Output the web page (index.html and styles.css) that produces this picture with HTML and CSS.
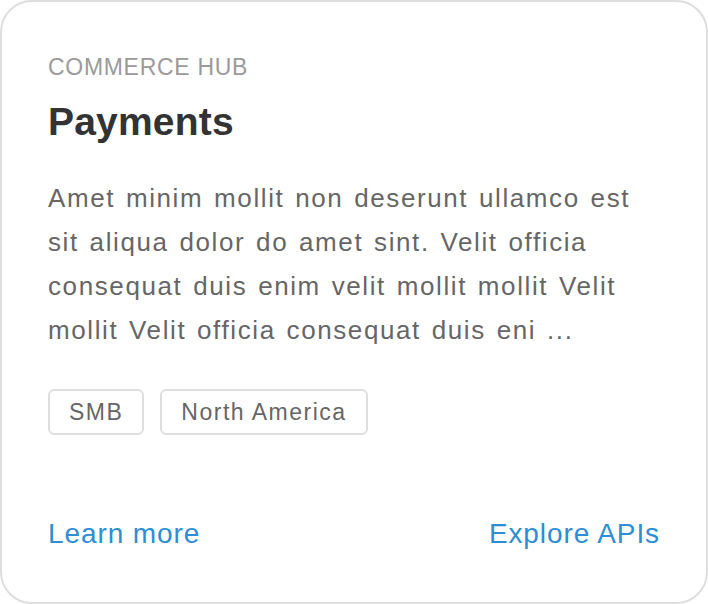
FILE: index.html
```html
<!DOCTYPE html>
<html>
<head>
<meta charset="utf-8">
<link rel="stylesheet" href="styles.css">
</head>
<body>
<div class="card">
  <div class="eyebrow">COMMERCE HUB</div>
  <h2 class="title">Payments</h2>
  <p class="desc">Amet minim mollit non deserunt ullamco est sit aliqua dolor do amet sint. Velit officia consequat duis enim velit mollit mollit Velit mollit Velit officia consequat duis eni ...</p>
  <div class="tags">
    <span class="tag">SMB</span>
    <span class="tag">North America</span>
  </div>
  <div class="links">
    <a class="link" href="#">Learn more</a>
    <a class="link" href="#">Explore APIs</a>
  </div>
</div>
</body>
</html>
```

FILE: styles.css
```css
* { box-sizing: border-box; }
html, body { margin: 0; padding: 0; background: #fff; }
body { font-family: "Liberation Sans", Arial, sans-serif; }
.card {
  width: 708px;
  height: 604px;
  border: 2px solid #dedede;
  border-radius: 32px;
  padding: 50px 46px 48px 46px;
  display: flex;
  flex-direction: column;
}
.eyebrow {
  font-size: 23px;
  line-height: 30px;
  letter-spacing: 0.7px;
  color: #9a9a9a;
}
.title {
  margin: 18px 0 0 0;
  font-size: 39px;
  line-height: 44px;
  font-weight: 700;
  letter-spacing: 0.2px;
  color: #333;
}
.desc {
  margin: 32px 0 0 0;
  font-size: 26px;
  line-height: 44px;
  letter-spacing: 1.6px;
  word-spacing: 2px;
  color: #666;
}
.tags {
  display: flex;
  gap: 16px;
  margin-top: 37px;
}
.tag {
  border: 2px solid #dedede;
  border-radius: 6px;
  height: 46px;
  padding: 0 19px;
  display: flex;
  align-items: center;
  font-size: 23px;
  letter-spacing: 1.5px;
  color: #666;
}
.links {
  margin-top: auto;
  display: flex;
  justify-content: space-between;
}
.link {
  font-size: 28px;
  line-height: 40px;
  letter-spacing: 0.9px;
  color: #2d8ed4;
  text-decoration: none;
}
```
